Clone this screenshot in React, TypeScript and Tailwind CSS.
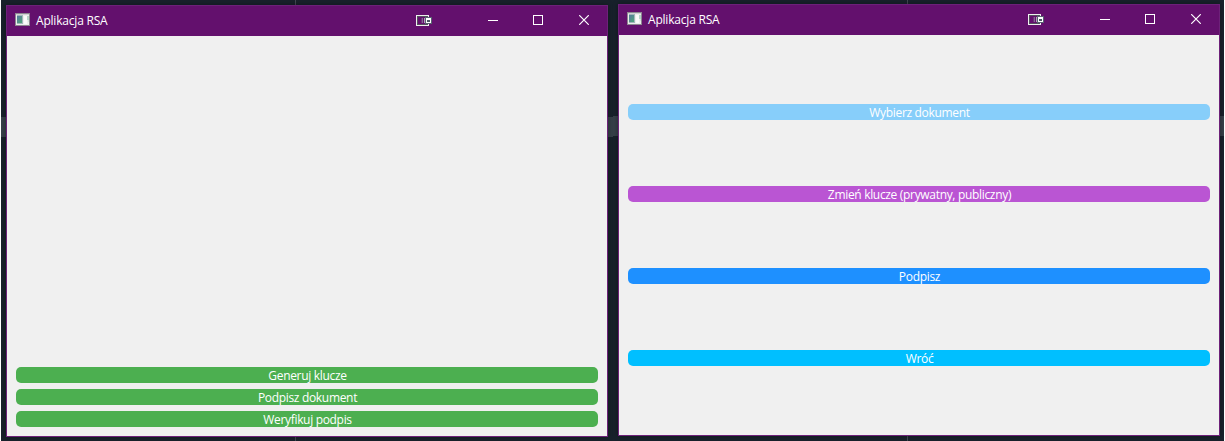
import type { ReactNode } from "react";

function AppIcon() {
  return (
    <svg width="15" height="13" viewBox="0 0 15 13" shapeRendering="crispEdges">
      <defs>
        <linearGradient id="pane" x1="0" y1="0" x2="1" y2="1">
          <stop offset="0" stopColor="#5679a0" />
          <stop offset="1" stopColor="#4fa577" />
        </linearGradient>
      </defs>
      <rect width="15" height="13" fill="#8d8791" />
      <rect x="1" y="1" width="13" height="11" fill="#eceeec" />
      <rect x="1" y="1" width="13" height="1" fill="#cfd3d3" />
      <rect x="2" y="2" width="6" height="9" fill="#a3b6bb" />
      <rect x="2" y="3" width="5" height="7" fill="url(#pane)" />
      <rect x="9" y="3" width="3" height="8" fill="#fafafa" />
      <rect x="12" y="3" width="2" height="4" fill="#b5d5c8" />
      <rect x="13" y="7" width="1" height="2" fill="#d4e5dc" />
    </svg>
  );
}

function DockIcon() {
  return (
    <svg width="16" height="12" viewBox="0 0 16 12" shapeRendering="crispEdges">
      <rect x="0.5" y="0.5" width="12" height="10" fill="none" stroke="#eef0ee" />
      <rect x="1" y="1" width="11" height="1" fill="#55505f" />
      <rect x="1" y="1" width="1" height="9" fill="#55505f" />
      <rect x="1" y="9" width="11" height="1" fill="#55505f" />
      <rect x="5" y="3" width="1" height="5" fill="#6a3478" />
      <rect x="6" y="3" width="1" height="5" fill="#856993" />
      <rect x="8" y="3" width="1" height="5" fill="#b4a3bc" />
      <rect x="9" y="2" width="7" height="7" fill="#586371" />
      <rect x="10" y="3" width="5" height="5" fill="#ffffff" />
      <rect x="11" y="5" width="3" height="2" fill="#4c5866" />
    </svg>
  );
}

function TitleBar() {
  return (
    <div className="flex h-[30px] shrink-0 bg-[#63106d]">
      <div className="pl-[8px] pt-[7px]">
        <AppIcon />
      </div>
      <span className="w-[90px] whitespace-nowrap pl-[6px] pt-[7px] text-[12px] leading-[16px] tracking-[-0.2px] text-white">
        Aplikacja RSA
      </span>
      <div className="ml-auto pt-[9px]">
        <DockIcon />
      </div>
      <div className="flex w-[175px] pt-[9px]">
        <svg className="ml-[56px]" width="10" height="11" shapeRendering="crispEdges">
          <rect y="5" width="10" height="1" fill="#fff" />
        </svg>
        <svg className="ml-[35px]" width="10" height="10" shapeRendering="crispEdges">
          <rect x="0.5" y="0.5" width="9" height="9" fill="none" stroke="#fff" />
        </svg>
        <svg className="ml-[36px]" width="10" height="10">
          <path d="M0.2 0.2L9.8 9.8M9.8 0.2L0.2 9.8" stroke="#fff" strokeWidth="1.2" />
        </svg>
      </div>
    </div>
  );
}

function Window({ children }: { children: ReactNode }) {
  return (
    <section className="relative flex h-[432px] w-[602px] flex-col border border-[#6d2179] bg-[#f0f0f0] shadow-[0_0_5px_rgba(0,0,0,0.35)]">
      <TitleBar />
      {children}
    </section>
  );
}

function Button({ color, label }: { color: string; label: string }) {
  return (
    <button className={`flex h-4 w-full justify-center rounded-[5px] ${color}`}>
      <span className="whitespace-nowrap pl-px text-[12px] leading-[18px] tracking-[-0.32px]">{label}</span>
    </button>
  );
}

export default function App() {
  return (
    <main className="flex h-[441px] w-[1225px] overflow-hidden bg-white px-px font-['Open_Sans','Noto_Sans',sans-serif] text-white">
      <div className="relative w-[612px] bg-[#18212b] pl-[5px] pt-[5px]">
        <div className="absolute left-0 top-[117px] h-5 w-full bg-[#363f48]" />
        <div className="absolute left-[294px] top-0 h-full w-px bg-[#414852]" />
        <Window>
          <div className="flex grow flex-col justify-end gap-1.5 px-[9px] pb-[9px]">
            <Button color="bg-[#4caf50]" label="Generuj klucze" />
            <Button color="bg-[#4caf50]" label="Podpisz dokument" />
            <Button color="bg-[#4caf50]" label="Weryfikuj podpis" />
          </div>
        </Window>
      </div>
      <div className="relative w-[611px] bg-[#18212b] pl-[5px] pt-[4px]">
        <div className="absolute left-0 top-[116px] h-5 w-full bg-[#363f48]" />
        <div className="absolute left-[294px] top-0 h-full w-px bg-[#414852]" />
        <Window>
          <div className="flex grow flex-col gap-[66px] px-[9px] pt-[69px]">
            <Button color="bg-[#87cefa]" label="Wybierz dokument" />
            <Button color="bg-[#ba55d3]" label="Zmień klucze (prywatny, publiczny)" />
            <Button color="bg-[#1e90ff]" label="Podpisz" />
            <Button color="bg-[#00bfff]" label="Wróć" />
          </div>
        </Window>
      </div>
    </main>
  );
}
